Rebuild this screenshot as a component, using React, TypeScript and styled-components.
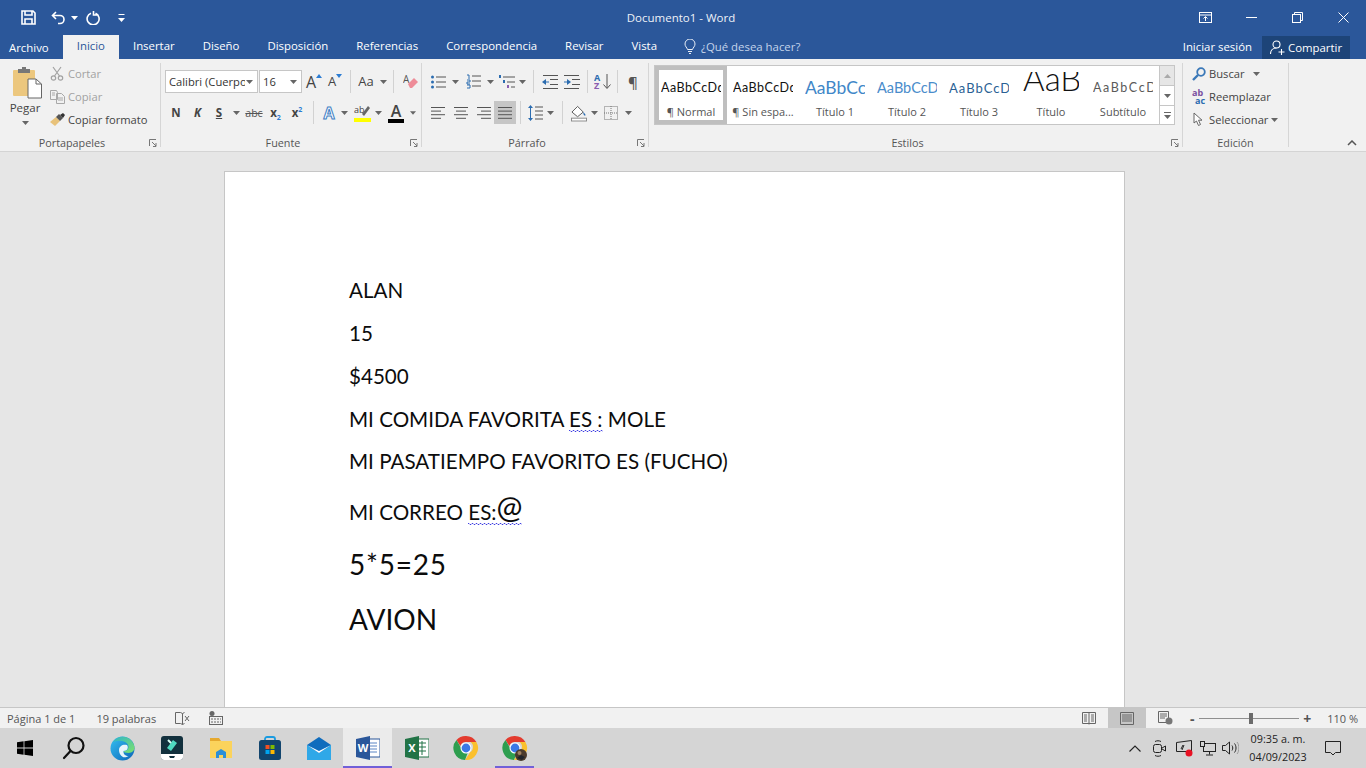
import * as React from "react";
import styled, { createGlobalStyle } from "styled-components";

const UI_FONT = `"Open Sans", "Noto Sans", "Liberation Sans", sans-serif`;
const DOC_FONT = `Lato, "Noto Sans", sans-serif`;

const SQUIGGLE = `url("data:image/svg+xml,%3Csvg xmlns='http://www.w3.org/2000/svg' width='4' height='2'%3E%3Cpath d='M0 .5L1 .5 2 1.500 3 1.500 4 .5' fill='none' stroke='%233030e0' stroke-width='.9'/%3E%3C/svg%3E")`;

const GlobalStyle = createGlobalStyle`
	html, body {
		margin: 0;
		padding: 0;
		height: 100%;
		overflow: hidden;
		background: #e6e6e6;
	}
	#root {
		width: 1366px;
		height: 768px;
	}
	* {
		box-sizing: border-box;
	}
`;

const Window = styled.div`
	width: 1366px;
	height: 768px;
	display: flex;
	flex-direction: column;
	font-family: ${UI_FONT};
	overflow: hidden;
`;

/* title bar */
const TitleBar = styled.div`
	height: 35px;
	background: #2b579a;
	display: grid;
	grid-template-columns: 1fr auto 1fr;
	align-items: center;
	color: #fff;
	font-size: 11.5px;
`;

const DocTitle = styled.div`
	margin-right: 4px;
	color: #eef2f8;
`;

const QuickAccess = styled.div`
	display: flex;
	align-items: center;
	padding-left: 21px;
`;

const QuickSlot = styled.div<{ $w: number }>`
	width: ${(p) => p.$w}px;
	display: flex;
	align-items: center;
`;

const WindowButtons = styled.div`
	display: flex;
	justify-content: flex-end;
	align-items: center;
`;

const WindowButton = styled.div`
	width: 46px;
	display: flex;
	justify-content: center;
`;

/* tabs */
const TabBar = styled.div`
	height: 24px;
	background: #2b579a;
	display: flex;
	align-items: stretch;
	font-size: 11.4px;
	color: #fff;
`;

const FileTab = styled.div`
	padding: 3px 14px 0 9px;
	line-height: 20px;
`;

const Tab = styled.div<{ $active?: boolean }>`
	line-height: 20px;
	padding: 1px 14px 0;
	background: ${(p) => (p.$active ? "#f1f1f1" : "transparent")};
	color: ${(p) => (p.$active ? "#2b579a" : "#fff")};
`;

const TellMe = styled.div`
	margin-left: 13px;
	display: flex;
	align-items: center;
	gap: 5px;
	color: #c4d4ea;
	padding-bottom: 2px;
`;

const TabSpacer = styled.div`
	flex: 1;
`;

const SignIn = styled.div`
	line-height: 21px;
	padding-top: 1px;
	margin-right: 10px;
`;

const ShareButton = styled.div`
	width: 88px;
	height: 23px;
	margin: 1px 16px 0 0;
	background: #1d4478;
	display: flex;
	align-items: center;
	gap: 3px;
	padding-left: 8px;
`;

/* ribbon */
const Ribbon = styled.div`
	height: 93px;
	background: #f1f1f1;
	border-bottom: 1px solid #d4d4d4;
	display: flex;
	padding-top: 4px;
	position: relative;
`;

const Group = styled.div<{ $w: number }>`
	width: ${(p) => p.$w}px;
	height: 84px;
	display: flex;
	flex-direction: column;
	border-right: 1px solid #d6d6d6;
`;

const GroupBody = styled.div`
	height: 70px;
	display: flex;
`;

const GroupFoot = styled.div<{ $launcher?: boolean }>`
	height: 14px;
	line-height: 20px;
	font-size: 10.8px;
	color: #555;
	text-align: center;
	position: relative;
	padding-right: ${(p) => (p.$launcher ? 16 : 0)}px;
`;

const Launcher = styled.svg`
	position: absolute;
	right: 3px;
	top: 6px;
`;

const PasteColumn = styled.div`
	width: 50px;
	display: flex;
	flex-direction: column;
	align-items: center;
	font-size: 11.5px;
	color: #444;
	line-height: 16px;
`;

const PasteArt = styled.div`
	height: 37px;
	padding: 4px 0 0 4px;
`;

const PasteCaret = styled.div`
	margin-top: 5px;
	display: flex;
`;

const SmallColumn = styled.div`
	margin-top: -1px;
	display: flex;
	flex-direction: column;
`;

const EditStack = styled(SmallColumn)`
	margin-left: 9px;
`;

const SmallRow = styled.div<{ $muted?: boolean }>`
	height: 23px;
	display: flex;
	align-items: center;
	gap: 3px;
	font-size: 11.2px;
	color: ${(p) => (p.$muted ? "#a2a2a2" : "#444")};
	white-space: nowrap;
`;

const RowCaret = styled.div`
	margin-left: 5px;
	display: flex;
`;

const ToolStack = styled.div<{ $left: number }>`
	padding: 7px 0 0 ${(p) => p.$left}px;
	display: flex;
	flex-direction: column;
	gap: 8px;
`;

const ToolRow = styled.div`
	height: 23px;
	display: flex;
	align-items: center;
`;

const Tool = styled.div<{ $w: number; $active?: boolean }>`
	width: ${(p) => p.$w}px;
	height: 23px;
	display: flex;
	align-items: center;
	justify-content: center;
	gap: ${(p) => (p.$w > 30 ? 6 : 0)}px;
	background: ${(p) => (p.$active ? "#c6c6c6" : "transparent")};
	color: #444;
	flex-shrink: 0;
`;

const ToolSep = styled.div<{ $space: number }>`
	width: 1px;
	height: 23px;
	background: #d2d2d2;
	margin: 0 ${(p) => p.$space}px;
	flex-shrink: 0;
`;

const Combo = styled.div<{ $w: number }>`
	width: ${(p) => p.$w}px;
	height: 23px;
	background: #fff;
	border: 1px solid #c6c6c6;
	margin-right: 1px;
	display: flex;
	align-items: center;
	justify-content: space-between;
	padding: 0 4px 0 3px;
	font-size: 11.2px;
	color: #333;
	white-space: nowrap;
	overflow: hidden;
`;

const ComboText = styled.span<{ $w: number }>`
	width: ${(p) => p.$w}px;
	overflow: hidden;
`;

const GrowA = styled.span<{ $size: number }>`
	font-size: ${(p) => p.$size}px;
	line-height: 1;
	color: #444;
`;

const GrowArrow = styled.svg`
	margin-top: -12px;
`;

const ToolLetter = styled.span<{ $italic?: boolean; $under?: boolean }>`
	font-size: 11.5px;
	font-weight: 700;
	color: #444;
	font-style: ${(p) => (p.$italic ? "italic" : "normal")};
	text-decoration: ${(p) => (p.$under ? "underline" : "none")};
`;

const StrikeText = styled.span`
	font-size: 10.5px;
	color: #555;
	text-decoration: line-through;
`;

const ScriptText = styled.span`
	font-size: 11.5px;
	font-weight: 700;
	color: #444;

	sub,
	sup {
		font-size: 7px;
		color: #2b7cd3;
		line-height: 0;
	}
`;

const EffectA = styled.span<{ $bar?: string; $glow?: boolean }>`
	width: 16px;
	text-align: center;
	font-size: 16px;
	line-height: 16px;
	font-weight: ${(p) => (p.$glow ? 700 : 600)};
	color: ${(p) => (p.$glow ? "#ffffff" : "#444")};
	-webkit-text-stroke: ${(p) => (p.$glow ? "1px #3f80c4" : "0")};
	border-bottom: ${(p) => (p.$bar ? `4px solid ${p.$bar}` : "0")};
	display: block;
	height: ${(p) => (p.$bar ? "20px" : "auto")};
`;

const Pilcrow = styled.span`
	font-size: 15px;
	font-weight: 600;
	color: #555;
`;

/* styles gallery */
const GalleryWrap = styled.div`
	display: flex;
	margin: 2px 0 8px 5px;
	height: 60px;
`;

const Gallery = styled.div`
	width: 506px;
	height: 60px;
	background: #fff;
	border: 1px solid #c6c6c6;
	display: flex;
`;

const StyleItem = styled.div<{ $selected?: boolean }>`
	width: 72px;
	height: 58px;
	border: 4px solid ${(p) => (p.$selected ? "#bfbfbf" : "transparent")};
	display: flex;
	flex-direction: column;
	align-items: center;
	overflow: hidden;
`;

const StyleSample = styled.div<{ $size: number; $color: string; $spacing?: number; $line?: number; $w?: number; $light?: boolean }>`
	width: ${(p) => p.$w || 60}px;
	height: 32px;
	margin-top: 2px;
	overflow: hidden;
	white-space: nowrap;
	font-family: ${DOC_FONT};
	font-size: ${(p) => p.$size}px;
	font-weight: ${(p) => (p.$light ? 300 : 400)};
	color: ${(p) => p.$color};
	letter-spacing: ${(p) => p.$spacing || 0}px;
	line-height: ${(p) => p.$line || 32}px;
`;

const StyleName = styled.div`
	font-size: 11px;
	line-height: 16px;
	color: #555;
	white-space: nowrap;
`;

const GalleryScroll = styled.div`
	width: 15px;
	display: flex;
	flex-direction: column;
`;

const ScrollButton = styled.div<{ $h: number; $dim?: boolean }>`
	height: ${(p) => p.$h}px;
	background: ${(p) => (p.$dim ? "#e6e6e6" : "#fff")};
	border: 1px solid #c6c6c6;
	border-left: 0;
	border-top-width: ${(p) => (p.$dim ? 1 : 0)}px;
	display: flex;
	align-items: center;
	justify-content: center;
`;

const Collapse = styled.svg`
	position: absolute;
	right: 9px;
	top: 81px;
`;

/* document */
const DocArea = styled.div`
	height: 555px;
	background: #e6e6e6;
	padding: 19px 17px 0 0;
	display: flex;
	justify-content: center;
	overflow: hidden;
`;

const Page = styled.div`
	width: 901px;
	height: 620px;
	flex-shrink: 0;
	background: #fff;
	border: 1px solid #c6c6c6;
	padding: 97px 0 0 124px;
	font-family: ${DOC_FONT};
	color: #0c0c0c;
`;

const DocLine = styled.div<{ $h: number; $size: number; $spacing?: number }>`
	height: ${(p) => p.$h}px;
	line-height: ${(p) => p.$h}px;
	font-size: ${(p) => p.$size}px;
	letter-spacing: ${(p) => p.$spacing || 0}px;
	white-space: pre;
`;

const Misspelt = styled.span`
	background: ${SQUIGGLE} repeat-x left bottom;
	padding-bottom: 1px;
`;

const AtSign = styled.span`
	font-size: 31px;
	line-height: 0;
	vertical-align: 2px;
`;

/* status bar */
const StatusBar = styled.div`
	height: 21px;
	background: #f1f1f1;
	border-top: 1px solid #c6c6c6;
	display: flex;
	align-items: center;
	font-size: 11px;
	color: #555;
`;

const StatusText = styled.div<{ $left: number }>`
	margin-left: ${(p) => p.$left}px;
	white-space: nowrap;
`;

const StatusIcon = styled.div<{ $left: number }>`
	margin-left: ${(p) => p.$left}px;
	display: flex;
`;

const StatusSpacer = styled.div`
	flex: 1;
`;

const ViewButton = styled.div<{ $active?: boolean }>`
	width: 38px;
	height: 20px;
	display: flex;
	align-items: center;
	justify-content: center;
	background: ${(p) => (p.$active ? "#c6c6c6" : "transparent")};
`;

const ZoomControls = styled.div`
	margin: 0 8px 0 1px;
	display: flex;
	align-items: center;
`;

const ZoomSlider = styled.div`
	width: 100px;
	height: 1px;
	margin-right: 1px;
	background: #8f8f8f;
	display: flex;
	align-items: center;
`;

const ZoomThumb = styled.div`
	width: 4px;
	height: 11px;
	background: #6b6b6b;
	margin-left: 50px;
`;

const ZoomMark = styled.span`
	font-size: 14px;
	font-weight: 700;
	color: #555;
	width: 14px;
	text-align: center;
`;

/* taskbar */
const Taskbar = styled.div`
	height: 40px;
	background: #d5d5d5;
	display: flex;
	align-items: stretch;
	padding-right: 9px;
`;

const TaskSlot = styled.div<{ $active?: boolean }>`
	width: 49px;
	display: flex;
	align-items: center;
	justify-content: center;
	background: ${(p) => (p.$active ? "#ebebeb" : "transparent")};
	border-bottom: 2px solid ${(p) => (p.$active ? "#7160d8" : "transparent")};
	border-top: 2px solid transparent;
`;

const RunningSlot = styled(TaskSlot)`
	background: linear-gradient(#7160d8, #7160d8) no-repeat 5px 100% / 39px 2px;
	background-origin: border-box;
	background-clip: border-box;
`;

const TaskSpacer = styled.div`
	flex: 1;
`;

const TrayIcon = styled.div<{ $w: number }>`
	width: ${(p) => p.$w}px;
	display: flex;
	align-items: center;
	justify-content: center;
`;

const Clock = styled.div`
	width: 60px;
	margin-left: 6px;
	display: flex;
	flex-direction: column;
	align-items: center;
	justify-content: center;
	font-size: 10.8px;
	line-height: 18px;
	color: #222;
	white-space: nowrap;
`;

const Caret = ({ color = "#666" }: { color?: string }) => (
	<svg width="7" height="4" viewBox="0 0 7 4">
		<path d="M0 0h7L3.5 4z" fill={color} />
	</svg>
);

const Lines = ({ x = [0, 0, 0, 0], w = [14, 14, 14, 14] }: { x?: number[]; w?: number[] }) => (
	<svg width="16" height="14" viewBox="0 0 16 14">
		{x.map((lx, i) => (
			<rect key={i} x={lx} y={1 + i * 3.6} width={w[i]} height="1" fill="#555" />
		))}
	</svg>
);

const LauncherIcon = () => (
	<Launcher width="8" height="8" viewBox="0 0 8 8">
		<path d="M.5 7V.5H7M3 3l4 4M7 4v3.5H4" fill="none" stroke="#777" />
	</Launcher>
);

const SaveIcon = () => (
	<svg width="15" height="15" viewBox="0 0 15 15" fill="none" stroke="#fff" strokeWidth="1.6">
		<path d="M1 1h11l2 2v11H1z" />
		<path d="M4 1v4h7V1M4 14V9h7v5" />
	</svg>
);

const ClipboardIcon = () => (
	<svg width="29" height="32" viewBox="0 0 29 32">
		<rect x="0" y="3" width="22" height="26" rx="1" fill="#ecc77e" />
		<rect x="5" y="2" width="12" height="4" fill="#777" />
		<rect x="9" y="0" width="4" height="3" fill="#777" />
		<path d="M15 12h8l5.500 5v14H15z" fill="#fff" stroke="#666" />
		<path d="M23 12v5h5.500" fill="none" stroke="#666" />
	</svg>
);

function ChromeIcon({ avatar }: { avatar?: boolean }) {
	return (
		<svg width="26" height="26" viewBox="0 0 26 26">
			<path d="M13 1a12 12 0 0 1 10.400 6H13a6 6 0 0 0-5.700 4L3.500 5A12 12 0 0 1 13 1z" fill="#e33b2e" />
			<path d="M23.400 7A12 12 0 0 1 12 25l5.300-8A6 6 0 0 0 17.500 7z" fill="#fbc02d" />
			<path d="M3.500 5l5.200 9a5 5 0 0 0 6 4L12 25A12 12 0 0 1 3.500 5z" fill="#2e9e4f" />
			<circle cx="13" cy="13" r="5.500" fill="#fff" />
			<circle cx="13" cy="13" r="4.400" fill="#3b78e7" />
			{avatar && (
				<>
					<circle cx="19" cy="20" r="6" fill="#4a3a2c" />
					<circle cx="17.500" cy="18" r="2" fill="#a08060" />
					<path d="M15 23l4-3 4 2-3 3z" fill="#20242a" />
				</>
			)}
		</svg>
	);
}

function TaskIcons() {
	return (
		<>
			<TaskSlot>
				<svg width="16" height="16" viewBox="0 0 16 16" fill="#000">
					<path d="M0 2.300l6.600-1v6.200H0zM7.400 1.200L16 0v7.500H7.400zM0 8.400h6.600v6.300l-6.600-1zM7.400 8.400H16V16l-8.600-1.200z" />
				</svg>
			</TaskSlot>
			<TaskSlot>
				<svg width="24" height="24" viewBox="0 0 24 24" fill="none" stroke="#111" strokeWidth="2.200">
					<circle cx="14" cy="9.500" r="7.500" />
					<path d="M8.500 15L2 22" strokeLinecap="round" />
				</svg>
			</TaskSlot>
			<TaskSlot>
				<svg width="25" height="25" viewBox="0 0 25 25">
					<defs>
						<linearGradient id="edgeA" x1="0" y1="0" x2="1" y2="1">
							<stop offset="0" stopColor="#35c1f1" />
							<stop offset="1" stopColor="#0b63b8" />
						</linearGradient>
						<linearGradient id="edgeB" x1="0" y1="0" x2="1" y2="1">
							<stop offset="0" stopColor="#2fb5c8" />
							<stop offset="1" stopColor="#7ee26b" />
						</linearGradient>
					</defs>
					<circle cx="12.500" cy="12.500" r="12" fill="url(#edgeA)" />
					<path d="M3 6C8-2 22-1 24.500 11c.3 3-2 6-6 6-3 0-5-1-5-2 5 0 6-4 4-7-3-4-10-4-14-2z" fill="url(#edgeB)" />
					<path d="M9 14c0-4 4-6 8-5 2 3 0 6-3.500 6-.5 3 2 5 5 5-6 4-9.500-2-9.500-6z" fill="#e8f4fa" />
				</svg>
			</TaskSlot>
			<TaskSlot>
				<svg width="22" height="24" viewBox="0 0 22 24">
					<rect x="0" y="0" width="22" height="24" rx="3" fill="#12303d" />
					<path d="M6 12l6-8 4 3-6 8z" fill="#4fd9c0" />
					<path d="M7 4l3 3" stroke="#d8fff6" strokeWidth="2" />
					<path d="M0 18h22v3a3 3 0 0 1-3 3H3a3 3 0 0 1-3-3z" fill="#fff" />
					<path d="M8 20h6l-1 2h-4z" fill="#12303d" />
				</svg>
			</TaskSlot>
			<TaskSlot>
				<svg width="22" height="20" viewBox="0 0 22 20">
					<path d="M0 0h9l2 3h11v17H0z" fill="#e6a92f" />
					<rect x="0" y="3" width="22" height="17" fill="#fbd35c" />
					<path d="M6 20v-6l5-3 5 3v6h-3v-3H9v3z" fill="#2c8fd8" />
				</svg>
			</TaskSlot>
			<TaskSlot>
				<svg width="22" height="24" viewBox="0 0 22 24">
					<path d="M6 5V3a2 2 0 0 1 2-2h6a2 2 0 0 1 2 2v2" fill="none" stroke="#1a9be0" strokeWidth="1.800" />
					<rect x="0" y="4" width="22" height="20" rx="2.500" fill="#12456e" />
					<rect x="6.500" y="9" width="4" height="4" fill="#f25022" />
					<rect x="11.500" y="9" width="4" height="4" fill="#7fba00" />
					<rect x="6.500" y="14" width="4" height="4" fill="#00a4ef" />
					<rect x="11.500" y="14" width="4" height="4" fill="#ffb900" />
				</svg>
			</TaskSlot>
			<TaskSlot>
				<svg width="24" height="23" viewBox="0 0 24 23">
					<path d="M0 8L12 0l12 8v15H0z" fill="#0f6cbd" />
					<path d="M0 8l12 8 12-8v15H0z" fill="#2fa8e8" />
					<path d="M0 8l12 8 12-8-12 6z" fill="#fff" />
				</svg>
			</TaskSlot>
			<TaskSlot $active>
				<svg width="24" height="24" viewBox="0 0 24 24">
					<rect x="10" y="3" width="14" height="18" fill="#fff" stroke="#2b579a" />
					<path d="M13 7h8M13 10h8M13 13h8M13 16h8" stroke="#5b85c4" />
					<path d="M0 3l14-3v24L0 21z" fill="#2b579a" />
					<text x="7" y="16" textAnchor="middle" fontSize="11" fontWeight="700" fill="#fff" fontFamily="Open Sans">W</text>
				</svg>
			</TaskSlot>
			<TaskSlot>
				<svg width="24" height="24" viewBox="0 0 24 24">
					<rect x="10" y="3" width="14" height="18" fill="#fff" stroke="#217346" />
					<path d="M13 7h8M13 11h8M13 15h8M17 5v14" stroke="#217346" />
					<path d="M0 3l14-3v24L0 21z" fill="#217346" />
					<text x="7" y="16" textAnchor="middle" fontSize="11" fontWeight="700" fill="#fff" fontFamily="Open Sans">X</text>
				</svg>
			</TaskSlot>
			<TaskSlot>
				<ChromeIcon />
			</TaskSlot>
			<RunningSlot>
				<ChromeIcon avatar />
			</RunningSlot>
		</>
	);
}

export default function App() {
	return (
		<Window>
			<GlobalStyle />
			<TitleBar>
				<QuickAccess>
					<QuickSlot $w={30}>
						<SaveIcon />
					</QuickSlot>
					<QuickSlot $w={20}>
						<svg width="15" height="14" viewBox="0 0 15 14" fill="none" stroke="#fff" strokeWidth="1.600">
							<path d="M5 1L1.500 4.500 5 8M2 4.500h7a4 4 0 0 1 0 8H7" />
						</svg>
					</QuickSlot>
					<QuickSlot $w={15}>
						<Caret color="#fff" />
					</QuickSlot>
					<QuickSlot $w={32}>
						<svg width="14" height="14" viewBox="0 0 14 14" fill="none" stroke="#fff" strokeWidth="1.600">
							<path d="M5 2.200A6 6 0 1 0 9.500 2.300M7.500 0v4H11" />
						</svg>
					</QuickSlot>
					<QuickSlot $w={10}>
						<svg width="7" height="8" viewBox="0 0 7 8" fill="#fff">
							<rect x="0.500" y="0" width="6" height="1" />
							<path d="M0 4h7L3.500 8z" />
						</svg>
					</QuickSlot>
				</QuickAccess>
				<DocTitle>Documento1 - Word</DocTitle>
				<WindowButtons>
					<WindowButton>
						<svg width="13" height="11" viewBox="0 0 13 11" fill="none" stroke="#fff">
							<rect x="0.500" y="0.500" width="12" height="10" />
							<path d="M0 3h13M6.500 9V5M4.500 6.500l2-2 2 2" />
						</svg>
					</WindowButton>
					<WindowButton>
						<svg width="11" height="1" viewBox="0 0 11 1">
							<rect width="11" height="1" fill="#fff" />
						</svg>
					</WindowButton>
					<WindowButton>
						<svg width="11" height="11" viewBox="0 0 11 11" fill="none" stroke="#fff">
							<rect x="0.500" y="2.500" width="8" height="8" />
							<path d="M2.500 2.500v-2h8v8h-2" />
						</svg>
					</WindowButton>
					<WindowButton>
						<svg width="11" height="11" viewBox="0 0 11 11" stroke="#fff">
							<path d="M0.500 0.500l10 10M10.500 0.500l-10 10" />
						</svg>
					</WindowButton>
				</WindowButtons>
			</TitleBar>
			<TabBar>
				<FileTab>Archivo</FileTab>
				<Tab $active>Inicio</Tab>
				<Tab>Insertar</Tab>
				<Tab>Diseño</Tab>
				<Tab>Disposición</Tab>
				<Tab>Referencias</Tab>
				<Tab>Correspondencia</Tab>
				<Tab>Revisar</Tab>
				<Tab>Vista</Tab>
				<TellMe>
					<svg width="12" height="15" viewBox="0 0 12 15" fill="none" stroke="#e8eef7">
						<path d="M3.500 10.500C3 8.500 1 7.500 1 5a5 5 0 0 1 10 0c0 2.500-2 3.500-2.500 5.500zM4 12.500h4M5 14.500h2" />
					</svg>
					¿Qué desea hacer?
				</TellMe>
				<TabSpacer />
				<SignIn>Iniciar sesión</SignIn>
				<ShareButton>
					<svg width="15" height="15" viewBox="0 0 15 15" fill="none" stroke="#fff" strokeWidth="1.100">
						<circle cx="6.500" cy="4.500" r="3.500" />
						<path d="M.500 14c0-3.500 2.500-6 6-6M11.500 9v6M8.500 12h6" />
					</svg>
					Compartir
				</ShareButton>
			</TabBar>

			<Ribbon>
				<Group $w={161}>
					<GroupBody>
						<PasteColumn>
							<PasteArt>
								<ClipboardIcon />
							</PasteArt>
							<span>Pegar</span>
							<PasteCaret>
								<Caret />
							</PasteCaret>
						</PasteColumn>
						<SmallColumn>
							<SmallRow $muted>
								<svg width="15" height="15" viewBox="0 0 15 15" fill="none" stroke="#a2a2a2" strokeWidth="1.200">
									<path d="M3 1l6.500 9M11 1L4.500 10" />
									<circle cx="3.500" cy="12" r="2.200" />
									<circle cx="10.500" cy="12" r="2.200" />
								</svg>
								Cortar
							</SmallRow>
							<SmallRow $muted>
								<svg width="15" height="14" viewBox="0 0 15 14" fill="none" stroke="#a8a8a8">
									<path d="M.500.500h6l1 2v7H.500zM6.500 3.500h5l3 3v7h-8zM2 3h3M2 5h3M8 8h5M8 10h5" />
								</svg>
								Copiar
							</SmallRow>
							<SmallRow>
								<svg width="15" height="13" viewBox="0 0 15 13">
									<path d="M0 9l6-5 4 4-5 5z" fill="#e8c27a" />
									<path d="M6 4l4 4 3-3-4-4z" fill="#555" />
									<path d="M10 2l3-2 2 2-2 3z" fill="#333" />
								</svg>
								Copiar formato
							</SmallRow>
						</SmallColumn>
					</GroupBody>
					<GroupFoot $launcher>
						Portapapeles
						<LauncherIcon />
					</GroupFoot>
				</Group>

				<Group $w={261}>
					<GroupBody>
						<ToolStack $left={4}>
							<ToolRow>
								<Combo $w={93}>
									<ComboText $w={76}>Calibri (Cuerpo)</ComboText>
									<Caret />
								</Combo>
								<Combo $w={43}>
									<span>16</span>
									<Caret />
								</Combo>
								<Tool $w={22}>
									<GrowA $size={16}>A</GrowA>
									<GrowArrow width="6" height="4" viewBox="0 0 6 4">
										<path d="M0 4l3-4 3 4z" fill="#2b7cd3" />
									</GrowArrow>
								</Tool>
								<Tool $w={20}>
									<GrowA $size={13}>A</GrowA>
									<GrowArrow width="6" height="4" viewBox="0 0 6 4">
										<path d="M0 0l3 4 3-4z" fill="#2b7cd3" />
									</GrowArrow>
								</Tool>
								<ToolSep $space={5} />
								<Tool $w={33}>
									<GrowA $size={13}>Aa</GrowA>
									<Caret />
								</Tool>
								<ToolSep $space={4} />
								<Tool $w={26}>
									<svg width="16" height="16" viewBox="0 0 16 16">
										<text x="0" y="9" fontSize="10" fill="#555" fontFamily="Open Sans">A</text>
										<path d="M5 10l6-6 4 4-6 6H7z" fill="#ee8c98" />
									</svg>
								</Tool>
							</ToolRow>
							<ToolRow>
								<Tool $w={22}>
									<ToolLetter>N</ToolLetter>
								</Tool>
								<Tool $w={21}>
									<ToolLetter $italic>K</ToolLetter>
								</Tool>
								<Tool $w={22}>
									<ToolLetter $under>S</ToolLetter>
								</Tool>
								<Tool $w={13}>
									<Caret />
								</Tool>
								<Tool $w={22}>
									<StrikeText>abc</StrikeText>
								</Tool>
								<Tool $w={21}>
									<ScriptText>
										x<sub>2</sub>
									</ScriptText>
								</Tool>
								<Tool $w={22}>
									<ScriptText>
										x<sup>2</sup>
									</ScriptText>
								</Tool>
								<ToolSep $space={5} />
								<Tool $w={20}>
									<EffectA $glow>A</EffectA>
								</Tool>
								<Tool $w={10}>
									<Caret />
								</Tool>
								<Tool $w={26}>
									<svg width="17" height="18" viewBox="0 0 17 18">
										<text x="0" y="9" fontSize="9" fill="#444" fontFamily="Open Sans">ab</text>
										<path d="M8 10l6-8 2 2-6 8z" fill="#666" />
										<rect x="0" y="14" width="17" height="4" fill="#ffff00" />
									</svg>
								</Tool>
								<Tool $w={7}>
									<Caret />
								</Tool>
								<Tool $w={28}>
									<EffectA $bar="#000">A</EffectA>
								</Tool>
								<Tool $w={6}>
									<Caret />
								</Tool>
							</ToolRow>
						</ToolStack>
					</GroupBody>
					<GroupFoot $launcher>
						Fuente
						<LauncherIcon />
					</GroupFoot>
				</Group>

				<Group $w={227}>
					<GroupBody>
						<ToolStack $left={6}>
							<ToolRow>
								<Tool $w={20}>
									<svg width="15" height="14" viewBox="0 0 15 14">
										<circle cx="1.500" cy="2" r="1.500" fill="#2b6cb0" />
										<circle cx="1.500" cy="7" r="1.500" fill="#2b6cb0" />
										<circle cx="1.500" cy="12" r="1.500" fill="#2b6cb0" />
										<path d="M5 2h10M5 7h10M5 12h10" stroke="#555" />
									</svg>
								</Tool>
								<Tool $w={15}>
									<Caret />
								</Tool>
								<Tool $w={20}>
									<svg width="15" height="15" viewBox="0 0 15 15">
										<path d="M1 1h2v4M1 6h3v2H1v2h3M1 11h3v3H1" fill="none" stroke="#2b6cb0" />
										<path d="M6 2h9M6 7h9M6 12h9" stroke="#555" />
									</svg>
								</Tool>
								<Tool $w={15}>
									<Caret />
								</Tool>
								<Tool $w={18}>
									<svg width="16" height="14" viewBox="0 0 16 14">
										<rect x="0" y="0" width="2" height="3" fill="#2b6cb0" />
										<path d="M4 2h12M8 7h8M12 12h4" stroke="#555" />
										<rect x="4" y="5" width="2" height="3" fill="#2b6cb0" />
										<rect x="8" y="10" width="2" height="3" fill="#8a5eb0" />
									</svg>
								</Tool>
								<Tool $w={12}>
									<Caret />
								</Tool>
								<ToolSep $space={5} />
								<Tool $w={22}>
									<svg width="16" height="14" viewBox="0 0 16 14">
										<path d="M0 7l4-3v6z" fill="#2b6cb0" />
										<path d="M4 6.500h3v1H4z" fill="#2b6cb0" />
										<path d="M1 .500h15M8 4.500h8M8 9.500h8M1 13.500h15" stroke="#555" />
									</svg>
								</Tool>
								<Tool $w={22}>
									<svg width="16" height="14" viewBox="0 0 16 14">
										<path d="M7 7L3 4v6z" fill="#2b6cb0" />
										<path d="M0 6.500h3v1H0z" fill="#2b6cb0" />
										<path d="M0 .500h15M8 4.500h8M8 9.500h8M0 13.500h15" stroke="#555" />
									</svg>
								</Tool>
								<ToolSep $space={4} />
								<Tool $w={22}>
									<svg width="18" height="17" viewBox="0 0 18 17">
										<text x="0" y="8" fontSize="9" fontWeight="700" fill="#2b6cb0" fontFamily="Open Sans">A</text>
										<text x="0" y="16" fontSize="9" fontWeight="700" fill="#8a5eb0" fontFamily="Open Sans">Z</text>
										<path d="M13 1v14M9.500 11.500l3.500 4 3.500-4" fill="none" stroke="#555" />
									</svg>
								</Tool>
								<ToolSep $space={3} />
								<Tool $w={24}>
									<Pilcrow>¶</Pilcrow>
								</Tool>
							</ToolRow>
							<ToolRow>
								<Tool $w={22}>
									<Lines w={[14, 10, 14, 10]} />
								</Tool>
								<Tool $w={22}>
									<Lines x={[1, 3, 1, 3]} w={[14, 10, 14, 10]} />
								</Tool>
								<Tool $w={22}>
									<Lines x={[2, 6, 2, 6]} w={[14, 10, 14, 10]} />
								</Tool>
								<Tool $w={22} $active>
									<Lines x={[1, 1, 1, 1]} />
								</Tool>
								<ToolSep $space={4} />
								<Tool $w={21}>
									<svg width="15" height="16" viewBox="0 0 15 16">
										<path d="M2.500 0l-2.500 3h5zM2.500 16l-2.500-3h5z" fill="#2b6cb0" />
										<path d="M2 3h1v10H2z" fill="#2b6cb0" />
										<path d="M7 2h8M7 6h8M7 10h8M7 14h8" stroke="#555" />
									</svg>
								</Tool>
								<Tool $w={8}>
									<Caret />
								</Tool>
								<ToolSep $space={8} />
								<Tool $w={16}>
									<svg width="17" height="18" viewBox="0 0 17 18">
										<path d="M1 8l6-6 6 6-6 5z" fill="#fff" stroke="#555" />
										<path d="M13 8c2 2 3 3 2 4-1 0-2-1-2-4z" fill="#2b6cb0" />
										<rect x="0.500" y="14.500" width="16" height="3" fill="#fff" stroke="#888" />
									</svg>
								</Tool>
								<Tool $w={14}>
									<Caret />
								</Tool>
								<Tool $w={20}>
									<svg width="14" height="14" viewBox="0 0 14 14" fill="none" stroke="#777" strokeDasharray="1 1">
										<rect x="0.500" y="0.500" width="13" height="13" />
										<path d="M7 0v14M0 7h14" />
									</svg>
								</Tool>
								<Tool $w={14}>
									<Caret />
								</Tool>
							</ToolRow>
						</ToolStack>
					</GroupBody>
					<GroupFoot $launcher>
						Párrafo
						<LauncherIcon />
					</GroupFoot>
				</Group>

				<Group $w={534}>
					<GalleryWrap>
						<Gallery>
							<StyleItem $selected>
								<StyleSample $size={12.5} $color="#111" $spacing={0.5}>AaBbCcDdEe</StyleSample>
								<StyleName>¶ Normal</StyleName>
							</StyleItem>
							<StyleItem>
								<StyleSample $size={12.5} $color="#111" $spacing={0.5}>AaBbCcDdEe</StyleSample>
								<StyleName>¶ Sin espa...</StyleName>
							</StyleItem>
							<StyleItem>
								<StyleSample $size={17.5} $color="#3f87c8">AaBbCcDd</StyleSample>
								<StyleName>Título 1</StyleName>
							</StyleItem>
							<StyleItem>
								<StyleSample $size={14.5} $color="#4a8ccb">AaBbCcDd</StyleSample>
								<StyleName>Título 2</StyleName>
							</StyleItem>
							<StyleItem>
								<StyleSample $size={13} $color="#2a5f94" $spacing={1}>AaBbCcDd</StyleSample>
								<StyleName>Título 3</StyleName>
							</StyleItem>
							<StyleItem>
								<StyleSample $size={33} $color="#111" $line={12} $w={56} $light>AaBbCc</StyleSample>
								<StyleName>Título</StyleName>
							</StyleItem>
							<StyleItem>
								<StyleSample $size={12.5} $color="#5a5a5a" $spacing={1.6}>AaBbCcDd</StyleSample>
								<StyleName>Subtítulo</StyleName>
							</StyleItem>
						</Gallery>
						<GalleryScroll>
							<ScrollButton $h={21} $dim>
								<svg width="7" height="4" viewBox="0 0 7 4">
									<path d="M0 4h7L3.500 0z" fill="#aaa" />
								</svg>
							</ScrollButton>
							<ScrollButton $h={20}>
								<Caret />
							</ScrollButton>
							<ScrollButton $h={19}>
								<svg width="7" height="7" viewBox="0 0 7 7" fill="#666">
									<rect width="7" height="1" />
									<path d="M0 3h7L3.500 7z" />
								</svg>
							</ScrollButton>
						</GalleryScroll>
					</GalleryWrap>
					<GroupFoot $launcher>
						Estilos
						<LauncherIcon />
					</GroupFoot>
				</Group>

				<Group $w={106}>
					<GroupBody>
						<EditStack>
							<SmallRow>
								<svg width="14" height="14" viewBox="0 0 14 14" fill="none" stroke="#3a78b8" strokeWidth="1.800">
									<circle cx="9" cy="5" r="3.800" />
									<path d="M6 8l-5 5" strokeWidth="2.400" />
								</svg>
								Buscar
								<RowCaret>
									<Caret />
								</RowCaret>
							</SmallRow>
							<SmallRow>
								<svg width="14" height="16" viewBox="0 0 14 16">
									<text x="0" y="7" fontSize="9" fontWeight="700" fill="#7a4fa0" fontFamily="Open Sans">ab</text>
									<text x="3" y="15" fontSize="9" fontWeight="700" fill="#2b6cb0" fontFamily="Open Sans">ac</text>
								</svg>
								Reemplazar
							</SmallRow>
							<SmallRow>
								<svg width="14" height="15" viewBox="0 0 14 15" fill="#fff" stroke="#666">
									<path d="M2 1v10l2.500-2 2 4.500 2-1-2-4.300h3.500z" />
								</svg>
								Seleccionar
								<Caret />
							</SmallRow>
						</EditStack>
					</GroupBody>
					<GroupFoot>Edición</GroupFoot>
				</Group>
				<Collapse width="10" height="6" viewBox="0 0 10 6" fill="none" stroke="#555" strokeWidth="1.500">
					<path d="M1 5l4-4 4 4" />
				</Collapse>
			</Ribbon>

			<DocArea>
				<Page>
					<DocLine $h={43} $size={20.6}>ALAN</DocLine>
					<DocLine $h={43} $size={20.6}>15</DocLine>
					<DocLine $h={43} $size={20.6}>$4500</DocLine>
					<DocLine $h={42} $size={20.6}>
						MI COMIDA FAVORITA <Misspelt>ES :</Misspelt> MOLE
					</DocLine>
					<DocLine $h={43} $size={20.6}>MI PASATIEMPO FAVORITO ES (FUCHO)</DocLine>
					<DocLine $h={58} $size={20.6}>
						MI CORREO <Misspelt>ES:<AtSign>@</AtSign></Misspelt>
					</DocLine>
					<DocLine $h={46} $size={28} $spacing={0.8}>5*5=25</DocLine>
					<DocLine $h={65} $size={28}>AVION</DocLine>
				</Page>
			</DocArea>

			<StatusBar>
				<StatusText $left={7}>Página 1 de 1</StatusText>
				<StatusText $left={21}>19 palabras</StatusText>
				<StatusIcon $left={19}>
					<svg width="15" height="15" viewBox="0 0 15 15" fill="none" stroke="#666">
						<path d="M.500 1.500h5l2 1v11l-2-1h-5zM7.500 2.500l2-1M7.500 13.500l2-1" />
						<path d="M10 5l4 5M14 5l-4 5" />
					</svg>
				</StatusIcon>
				<StatusIcon $left={19}>
					<svg width="14" height="14" viewBox="0 0 14 14">
						<circle cx="3" cy="2.500" r="2.500" fill="#666" />
						<rect x="0.500" y="5.500" width="13" height="8" fill="none" stroke="#666" />
						<path d="M2 8h10M2 11h10" stroke="#666" strokeDasharray="2 1" />
					</svg>
				</StatusIcon>
				<StatusSpacer />
				<ViewButton>
					<svg width="14" height="13" viewBox="0 0 14 13" fill="none" stroke="#666">
						<path d="M.500.500h13v11h-13zM7 .500v12M2 3h3M2 5h3M2 7h3M2 9h3M9 3h3M9 5h3M9 7h3M9 9h3" />
					</svg>
				</ViewButton>
				<ViewButton $active>
					<svg width="14" height="13" viewBox="0 0 14 13" fill="none" stroke="#666">
						<path d="M.500.500h13v12h-13zM2 3h10M2 5h10M2 7h10M2 9h10" />
					</svg>
				</ViewButton>
				<ViewButton>
					<svg width="15" height="14" viewBox="0 0 15 14">
						<path d="M.500.500h10v11h-10zM2 3h7M2 5h7M2 7h5" fill="none" stroke="#666" />
						<circle cx="11" cy="10" r="3.500" fill="#777" />
					</svg>
				</ViewButton>
				<ZoomControls>
					<ZoomMark>-</ZoomMark>
					<ZoomSlider>
						<ZoomThumb />
					</ZoomSlider>
					<ZoomMark>+</ZoomMark>
					<StatusText $left={13}>110 %</StatusText>
				</ZoomControls>
			</StatusBar>

			<Taskbar>
				<TaskIcons />
				<TaskSpacer />
				<TrayIcon $w={24}>
					<svg width="12" height="7" viewBox="0 0 12 7" fill="none" stroke="#222" strokeWidth="1.100">
						<path d="M.500 6.500L6 1l5.500 5.500" />
					</svg>
				</TrayIcon>
				<TrayIcon $w={25}>
					<svg width="13" height="17" viewBox="0 0 13 17" fill="none" stroke="#222">
						<rect x="0.500" y="4.500" width="8" height="8" rx="2" />
						<path d="M9 8l3.500-2v5L9 9M2 1.500c2-1 4-1 6 0M2 15.500c2 1 4 1 6 0" />
					</svg>
				</TrayIcon>
				<TrayIcon $w={24}>
					<svg width="17" height="17" viewBox="0 0 17 17">
						<path d="M.500 2.500l15-2v11h-15z" fill="none" stroke="#222" />
						<path d="M5 9l2-4M8 5l-2 5" stroke="#222" />
						<circle cx="13" cy="13" r="3.500" fill="#e81123" />
					</svg>
				</TrayIcon>
				<TrayIcon $w={23}>
					<svg width="16" height="15" viewBox="0 0 16 15" fill="none" stroke="#222">
						<rect x="3.500" y="2.500" width="12" height="8" />
						<rect x="0.500" y="0.500" width="4" height="5" fill="#d5d5d5" />
						<path d="M9.500 10.500v3M6 14h7" />
					</svg>
				</TrayIcon>
				<TrayIcon $w={23}>
					<svg width="17" height="14" viewBox="0 0 17 14" fill="none" stroke="#222">
						<path d="M.500 4.500h3l4-3.500v12l-4-3.500h-3zM10 4.500c1 1.500 1 3.500 0 5M12.500 2.500c2 2.500 2 6.500 0 9" />
						<path d="M15 1c2.500 3 2.500 9 0 12" stroke="#999" />
					</svg>
				</TrayIcon>
				<Clock>
					<div>09:35 a. m.</div>
					<div>04/09/2023</div>
				</Clock>
				<TrayIcon $w={49}>
					<svg width="16" height="15" viewBox="0 0 16 15" fill="none" stroke="#222">
						<path d="M.500.500h15v11h-5l-2.500 2.500-2.500-2.500h-5z" />
					</svg>
				</TrayIcon>
			</Taskbar>
		</Window>
	);
}
